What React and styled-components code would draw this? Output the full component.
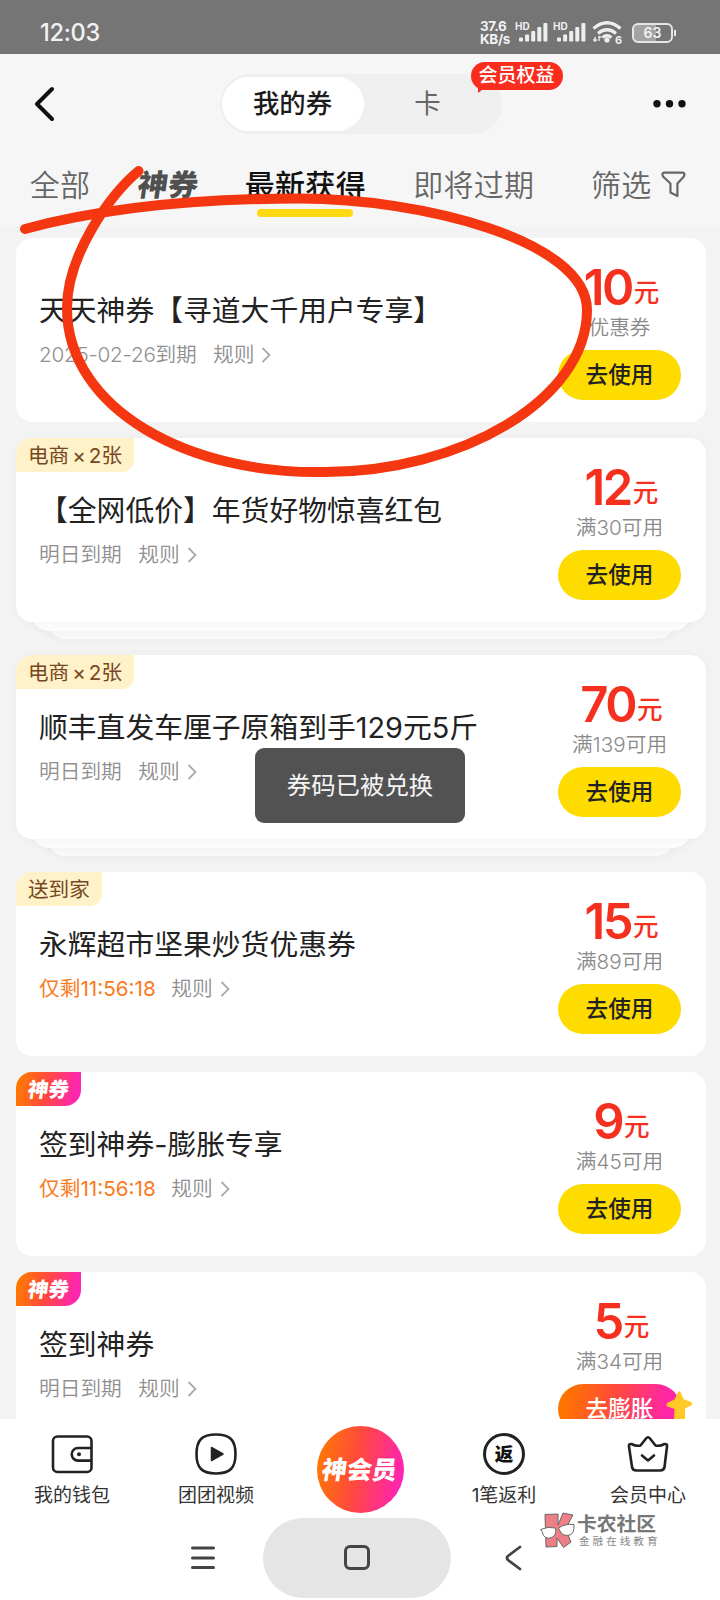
import React from "react";
import styled, { createGlobalStyle, css } from "styled-components";

const Global = createGlobalStyle`
  * { box-sizing: border-box; }
  body {
    margin: 0;
    background: #f3f3f3;
    font-family: Inter, "Noto Sans CJK SC", sans-serif;
    text-spacing-trim: space-all;
  }
`;

const Screen = styled.div`
  position: relative;
  width: 720px;
  height: 1600px;
  overflow: hidden;
  display: flex;
  flex-direction: column;
  background: #f3f3f3;
  white-space: nowrap;
`;

const StatusBar = styled.div`
  flex: none;
  height: 54px;
  padding: 11px 47px 0 40px;
  background: #757575;
  color: #f2f2f2;
  display: flex;
  align-items: center;
  justify-content: space-between;
`;
const Clock = styled.span`
  font-size: 23.6px;
  line-height: 24px;
  font-weight: 500;
  letter-spacing: -0.3px;
`;
const StatusIcons = styled.div`
  display: flex;
  align-items: center;
  height: 26px;
`;
const Speed = styled.div`
  width: 35px;
  font-size: 13.4px;
  line-height: 13px;
  font-weight: 700;
  letter-spacing: -0.3px;
`;
const StatusGlyph = styled.svg`
  display: block;
  flex: none;
`;
const Battery = styled.div`
  position: relative;
  width: 41px;
  height: 20px;
  margin-left: 9px;
  border: 2px solid #e6e6e6;
  border-radius: 6px;
  background: linear-gradient(90deg, #a3a3a3 60%, #757575 60%);
  font-size: 14px;
  line-height: 16px;
  font-weight: 600;
  text-align: center;
  &::after {
    content: "";
    position: absolute;
    right: -5px;
    top: 5px;
    width: 2px;
    height: 6px;
    background: #e6e6e6;
  }
`;

const Header = styled.header`
  flex: none;
  height: 172px;
  background: #f6f6f6;
`;
const TitleBar = styled.div`
  height: 100px;
  padding: 0 33px 0 34px;
  display: flex;
  align-items: center;
  justify-content: space-between;
`;
const Switcher = styled.div`
  position: relative;
  width: 282px;
  height: 60px;
  margin-left: 14px;
  padding: 3px 2px;
  border-radius: 30px;
  background: #efefef;
  display: flex;
`;
const Segment = styled.div`
  width: ${(p) => (p.$active ? 142 : 128)}px;
  height: 54px;
  border-radius: 27px;
  background: ${(p) => (p.$active ? "#fff" : "transparent")};
  color: ${(p) => (p.$active ? "#1c1c1c" : "#666")};
  font-size: 26.4px;
  line-height: 53px;
  font-weight: ${(p) => (p.$active ? 500 : 400)};
  text-align: center;
`;
const Bubble = styled.div`
  position: absolute;
  left: 251px;
  top: -12.5px;
  width: 92px;
  height: 28px;
  border-radius: 14px;
  background: #fa2c1e;
  color: #fff;
  font-size: 19px;
  line-height: 28px;
  font-weight: 500;
  text-align: center;
  &::after {
    content: "";
    position: absolute;
    left: 7px;
    bottom: -3px;
    border-top: 7px solid #fa2c1e;
    border-right: 9px solid transparent;
  }
`;

const Tabs = styled.nav`
  height: 72px;
  padding: 12px 34px 0 30px;
  display: flex;
  align-items: flex-start;
`;
const Tab = styled.div`
  display: flex;
  flex-direction: column;
  align-items: center;
  width: ${(p) => p.$w}px;
  margin-right: ${(p) => p.$gap}px;
  font-size: 30px;
  line-height: 39px;
  letter-spacing: 0.3px;
  color: ${(p) => (p.$active ? "#111" : "#666")};
  font-weight: ${(p) => (p.$active ? 500 : 350)};
  ${(p) =>
    p.$active &&
    css`
      &::after {
        content: "";
        width: 96px;
        height: 8px;
        margin-top: 4px;
        border-radius: 4px;
        background: #ffd911;
      }
    `}
`;
const ArtText = styled.span`
  display: inline-block;
  font-size: ${(p) => p.$size}px;
  line-height: inherit;
  font-weight: 900;
  color: ${(p) => p.$color};
  transform: skewX(-8deg);
`;
const FilterIcon = styled.svg`
  margin-top: 5px;
`;

const List = styled.main`
  flex: 1;
  min-height: 0;
  overflow: hidden;
  padding: 12px 14px 0 16px;
`;
const Stack = styled.div`
  margin-bottom: 16px;
`;
const Card = styled.article`
  position: relative;
  z-index: 2;
  height: 184px;
  border-radius: 16px;
  background: #fff;
  display: flex;
  justify-content: space-between;
  ${(p) => p.$stacked && "box-shadow: 0 0 10px rgba(0,0,0,0.035);"}
`;
const Sheet = styled.div`
  position: relative;
  z-index: ${(p) => (p.$last ? 0 : 1)};
  height: 25px;
  margin: ${(p) => (p.$last ? "-17px 30px 0" : "-16px 14px 0")};
  border-radius: 0 0 20px 20px;
  background: ${(p) => (p.$last ? "#fafafa" : "#fcfcfc")};
  box-shadow: 0 2px 8px rgba(0, 0, 0, 0.035);
`;
const Info = styled.div`
  display: flex;
  flex-direction: column;
  align-items: flex-start;
`;
const TagSlot = styled.div`
  height: 53px;
`;
const Tag = styled.div`
  height: 34px;
  padding: 0 12px;
  border-radius: 16px 0 12px 0;
  background: #fff1c8;
  color: #754722;
  font-size: 20.6px;
  line-height: 35px;
`;
const Times = styled.span`
  margin: 0 3px;
`;
const GodTag = styled.div`
  width: 65px;
  height: 34px;
  border-radius: 16px 0 16px 0;
  background: linear-gradient(100deg, #ff7a00 5%, #ff4a3c 45%, #ff26b0 90%);
  line-height: 35px;
  text-align: center;
`;
const Title = styled.h3`
  margin: 0 0 0 23px;
  font-size: 28.8px;
  line-height: 40px;
  font-weight: 400;
  color: #222;
`;
const Meta = styled.div`
  display: flex;
  align-items: center;
  height: 28px;
  margin: 9.5px 0 0 23px;
  font-size: 20.7px;
  line-height: 28px;
  font-weight: 350;
  color: #8f8f8f;
`;
const Expiry = styled.span`
  margin-right: ${(p) => (p.$urgent ? 15.5 : 16.5)}px;
  letter-spacing: ${(p) => p.$track || 0}px;
  color: ${(p) => (p.$urgent ? "#f97a1c" : "inherit")};
  font-weight: ${(p) => (p.$urgent ? 400 : "inherit")};
`;
const Chevron = styled.svg`
  margin-left: 7px;
`;
const Offer = styled.div`
  width: 123px;
  margin-right: 25px;
  display: flex;
  flex-direction: column;
  align-items: center;
`;
const Price = styled.div`
  height: 76px;
  padding: 19.5px 0 0 4px;
  color: #f6301f;
  font-size: 49px;
  line-height: 60px;
  font-weight: 600;
  letter-spacing: -2.5px;
`;
const Unit = styled.span`
  position: relative;
  top: -3px;
  margin-left: 2px;
  font-size: 25.6px;
  font-weight: 500;
  letter-spacing: 0;
`;
const Condition = styled.div`
  height: 35.5px;
  font-size: 20.7px;
  line-height: 28px;
  font-weight: 350;
  color: #8a8a8a;
`;
const UseButton = styled.button`
  position: relative;
  width: 123px;
  height: 50px;
  padding: 0;
  border: 0;
  border-radius: 25px;
  background: ${(p) =>
    p.$hot ? "linear-gradient(100deg, #ff7300 8%, #ff4a3c 45%, #ff26a8 85%)" : "#ffdc00"};
  color: ${(p) => (p.$hot ? "#fff" : "#222")};
  font: 500 22.6px/49px Inter, "Noto Sans CJK SC", sans-serif;
`;
const Star = styled.svg`
  position: absolute;
  right: -12px;
  top: 6px;
`;

const Footer = styled.footer`
  flex: none;
  height: 181px;
  background: #fff;
`;
const Dock = styled.div`
  height: 98px;
  display: grid;
  grid-template-columns: repeat(5, 144px);
`;
const DockItem = styled.div`
  display: flex;
  flex-direction: column;
  align-items: center;
  padding-top: 13px;
  font-size: 19px;
  line-height: 27px;
  color: #333;
`;
const DockIcon = styled.svg`
  flex: none;
  width: 44px;
  height: 44px;
  margin-bottom: 6px;
`;
const Coin = styled.div`
  flex: none;
  width: 42px;
  height: 42px;
  margin: 1px 0 7px;
  border: 3px solid #222;
  border-radius: 50%;
  font-size: 18.5px;
  line-height: 36px;
  font-weight: 900;
  color: #111;
  text-align: center;
`;
const Member = styled.div`
  flex: none;
  width: 87px;
  height: 87px;
  margin-top: -6px;
  border-radius: 50%;
  background: linear-gradient(100deg, #ff7a00 3%, #ff4a3c 45%, #ff1fc0 97%);
  line-height: 88px;
  text-align: center;
`;
const SystemNav = styled.div`
  position: relative;
  height: 83px;
  padding: 0 198px 2px 191px;
  display: flex;
  align-items: center;
  justify-content: space-between;
`;
const HomePill = styled.div`
  width: 188px;
  height: 80px;
  margin-left: -6px;
  border-radius: 40px;
  background: #e5e5e5;
  display: flex;
  align-items: center;
  justify-content: center;
`;
const HomeSquare = styled.div`
  width: 26px;
  height: 25px;
  border: 3px solid #444;
  border-radius: 6px;
`;
const Watermark = styled.div`
  position: absolute;
  left: 540px;
  top: -5px;
  display: flex;
  gap: 2px;
  color: #777;
`;
const Brand = styled.div`
  font-size: 19.8px;
  line-height: 24px;
  font-weight: 700;
`;
const Slogan = styled.div`
  padding-left: 2px;
  font-size: 10.6px;
  line-height: 11px;
  letter-spacing: 3px;
  color: #888;
`;

const Toast = styled.div`
  position: absolute;
  z-index: 5;
  left: 255px;
  top: 748px;
  width: 210px;
  height: 75px;
  border-radius: 9px;
  background: #525252;
  color: #f4f4f4;
  font-size: 24.4px;
  line-height: 75px;
  text-align: center;
`;
const Scribble = styled.svg`
  position: absolute;
  z-index: 6;
  left: 0;
  top: 0;
  pointer-events: none;
`;

const Signal = () => (
  <StatusGlyph width="38" height="26" viewBox="0 0 38 26">
    <text x="0" y="9.5" fontSize="10" fontWeight="700" fill="#eee">HD</text>
    {[4, 7, 10.5, 14.5, 18.5].map((h, i) => (
      <rect key={i} x={4 + i * 6.1} y={21.5 - h} width="4" height={h} rx="1" fill="#eee" />
    ))}
  </StatusGlyph>
);

const coupons = [
  { title: "天天神券【寻道大千用户专享】", expiry: "2025-02-26到期", track: -0.25, price: "10", cond: "优惠券" },
  { tag: "电商", count: "2张", title: "【全网低价】年货好物惊喜红包", expiry: "明日到期", price: "12", cond: "满30可用" },
  { tag: "电商", count: "2张", title: "顺丰直发车厘子原箱到手129元5斤", expiry: "明日到期", price: "70", cond: "满139可用" },
  { tag: "送到家", title: "永辉超市坚果炒货优惠券", expiry: "仅剩11:56:18", urgent: true, price: "15", cond: "满89可用" },
  { god: true, title: "签到神券-膨胀专享", expiry: "仅剩11:56:18", urgent: true, price: "9", cond: "满45可用" },
  { god: true, title: "签到神券", expiry: "明日到期", price: "5", cond: "满34可用", hot: true },
];

const Coupon = ({ c }) => (
  <Stack>
    <Card $stacked={!!c.count}>
      <Info>
        <TagSlot>
          {c.tag && (
            <Tag>
              {c.tag}
              {c.count && <Times>×</Times>}
              {c.count}
            </Tag>
          )}
          {c.god && (
            <GodTag>
              <ArtText $size={20.5} $color="#fff">神券</ArtText>
            </GodTag>
          )}
        </TagSlot>
        <Title>{c.title}</Title>
        <Meta>
          <Expiry $urgent={c.urgent} $track={c.track}>{c.expiry}</Expiry>
          规则
          <Chevron width="10" height="18" viewBox="0 0 10 18">
            <path d="M1.5 2 L8.5 9 L1.5 16" fill="none" stroke="#aaa" strokeWidth="1.8" />
          </Chevron>
        </Meta>
      </Info>
      <Offer>
        <Price>
          {c.price}
          <Unit>元</Unit>
        </Price>
        <Condition>{c.cond}</Condition>
        <UseButton $hot={c.hot}>
          {c.hot ? "去膨胀" : "去使用"}
          {c.hot && (
            <Star width="28" height="30" viewBox="0 0 28 30">
              <path
                d="M13 2Q14.5 0 16 3L18.5 9L26 12Q28.500 13.500 26 15.500L20 18.500V30H9L9.500 19L2.500 16.500Q0 14.500 3 12.500L9.500 9.500Z"
                fill="#ffc928"
              />
            </Star>
          )}
        </UseButton>
      </Offer>
    </Card>
    {c.count && (
      <>
        <Sheet />
        <Sheet $last />
      </>
    )}
  </Stack>
);

export default function App() {
  return (
    <Screen>
      <Global />
      <StatusBar>
        <Clock>12:03</Clock>
        <StatusIcons>
          <Speed>37.6<br />KB/s</Speed>
          <Signal />
          <Signal />
          <StatusGlyph width="32" height="26" viewBox="0 0 32 26">
            <g fill="none" stroke="#eee" strokeWidth="3.2">
              <path d="M2.5 8.5 Q16 -3 29.5 8.5" />
              <path d="M7 13.5 Q16 6 25 13.5" />
              <path d="M11.5 17.5 Q16 14 20.5 17.5" />
            </g>
            <circle cx="16" cy="20" r="2.6" fill="#eee" />
            <path d="M2 20h4M4 17v5M8 16v5M8 17h2.5" stroke="#eee" strokeWidth="1.4" />
            <text x="24" y="23.5" fontSize="11" fontWeight="700" fill="#eee">6</text>
          </StatusGlyph>
          <Battery>63</Battery>
        </StatusIcons>
      </StatusBar>

      <Header>
        <TitleBar>
          <svg width="22" height="38" viewBox="0 0 22 38">
            <path d="M18 4 L3 19 L18 34" fill="none" stroke="#111" strokeWidth="4" strokeLinecap="round" strokeLinejoin="round" />
          </svg>
          <Switcher>
            <Segment $active>我的券</Segment>
            <Segment>卡</Segment>
            <Bubble>会员权益</Bubble>
          </Switcher>
          <svg width="36" height="10" viewBox="0 0 36 10">
            <circle cx="6" cy="4.8" r="3.7" fill="#111" />
            <circle cx="18.5" cy="4.8" r="3.7" fill="#111" />
            <circle cx="31" cy="4.8" r="3.7" fill="#111" />
          </svg>
        </TitleBar>
        <Tabs>
          <Tab $w={60} $gap={47}>全部</Tab>
          <Tab $w={62} $gap={46}>
            <ArtText $size={30} $color="#505050">神券</ArtText>
          </Tab>
          <Tab $w={122} $gap={47} $active>最新获得</Tab>
          <Tab $w={122} $gap={56}>即将过期</Tab>
          <Tab $w={62} $gap={9}>筛选</Tab>
          <FilterIcon width="25" height="27" viewBox="0 0 25 27">
            <path
              d="M3 1.5H22Q24.5 2 23 5.5L16.5 12.5V25L9.5 21.5V12.5L2 5.5Q.5 2 3 1.5Z"
              fill="none" stroke="#666" strokeWidth="2.2" strokeLinejoin="round"
            />
          </FilterIcon>
        </Tabs>
      </Header>

      <List>
        {coupons.map((c, i) => (
          <Coupon key={i} c={c} />
        ))}
      </List>

      <Footer>
        <Dock>
          <DockItem>
            <DockIcon viewBox="0 0 44 44" fill="none" stroke="#222" strokeWidth="2.6">
              <rect x="3" y="4.5" width="38.5" height="35.5" rx="4.5" />
              <path d="M41 16H28a6.3 6.3 0 0 0 0 12.6H41" />
              <circle cx="29" cy="22.3" r="2" fill="#222" stroke="none" />
            </DockIcon>
            我的钱包
          </DockItem>
          <DockItem>
            <DockIcon viewBox="0 0 44 44">
              <path
                d="M22 2.5C36 2.5 41.5 8 41.5 22S36 41.5 22 41.5 2.5 36 2.5 22 8 2.5 22 2.5Z"
                fill="none" stroke="#222" strokeWidth="2.6"
              />
              <path d="M17.5 15.5V28.5L29 22Z" fill="#222" stroke="#222" strokeWidth="1.5" strokeLinejoin="round" />
            </DockIcon>
            团团视频
          </DockItem>
          <DockItem>
            <Member>
              <ArtText $size={25} $color="#fff">神会员</ArtText>
            </Member>
          </DockItem>
          <DockItem>
            <Coin>返</Coin>
            1笔返利
          </DockItem>
          <DockItem>
            <DockIcon viewBox="0 0 44 44" fill="none" stroke="#222" strokeWidth="2.6" strokeLinejoin="round" strokeLinecap="round">
              <path d="M3 14.5Q2.5 11.5 5.5 12Q10 14.5 14.5 13.5L20 6.5Q22 4 24 6.5L29.5 13.5Q34 14.5 38.5 12Q41.5 11.5 41 14.5L38.5 35Q38 38.5 34 38.5H10.5Q6.5 38.5 6 35Z" />
              <path d="M16 23.5L22 28.5L28 23.5" />
            </DockIcon>
            会员中心
          </DockItem>
        </Dock>
        <SystemNav>
          <svg width="24" height="24" viewBox="0 0 24 24" stroke="#444" strokeWidth="3" strokeLinecap="round">
            <path d="M1.5 2H22.5M1.5 12H22.5M1.5 21.5H22.5" />
          </svg>
          <HomePill>
            <HomeSquare />
          </HomePill>
          <svg width="17" height="26" viewBox="0 0 17 26" fill="none" stroke="#444" strokeWidth="2.8" strokeLinecap="round" strokeLinejoin="round">
            <path d="M15 2L3 11Q1 13 3 15L15 24" />
          </svg>
          <Watermark>
            <svg width="35" height="37" viewBox="0 0 35 37" stroke="#666" strokeWidth="1">
              <path d="M5 2.5L18 2V13L23 1L33 3L25.5 17L31 30L23.5 35.5L17 26V34.5L6 35Z" fill="#ee7f86" />
              <path d="M.5 17.5Q8 14 15.500 16Q17 23 12 25.500Q4 28.500 2 19.500Z" fill="#fff" />
              <path d="M18.500 16Q25 11.500 34 12.500Q34.500 21 30 23Q22 25 19.500 18Z" fill="#fff" />
            </svg>
            <div>
              <Brand>卡农社区</Brand>
              <Slogan>金融在线教育</Slogan>
            </div>
          </Watermark>
        </SystemNav>
      </Footer>

      <Toast>券码已被兑换</Toast>
      <Scribble width="720" height="500" viewBox="0 0 720 500">
        <path
          d="M25 229C110 206 210 198.5 300 198.5C420 198.5 587 240 587 310C587 400 460 472 325 472C190 475 67 410 67 308C67 255 110 195 138.5 171"
          fill="none" stroke="#f43611" strokeWidth="10" strokeLinecap="round" strokeLinejoin="round"
        />
      </Scribble>
    </Screen>
  );
}
